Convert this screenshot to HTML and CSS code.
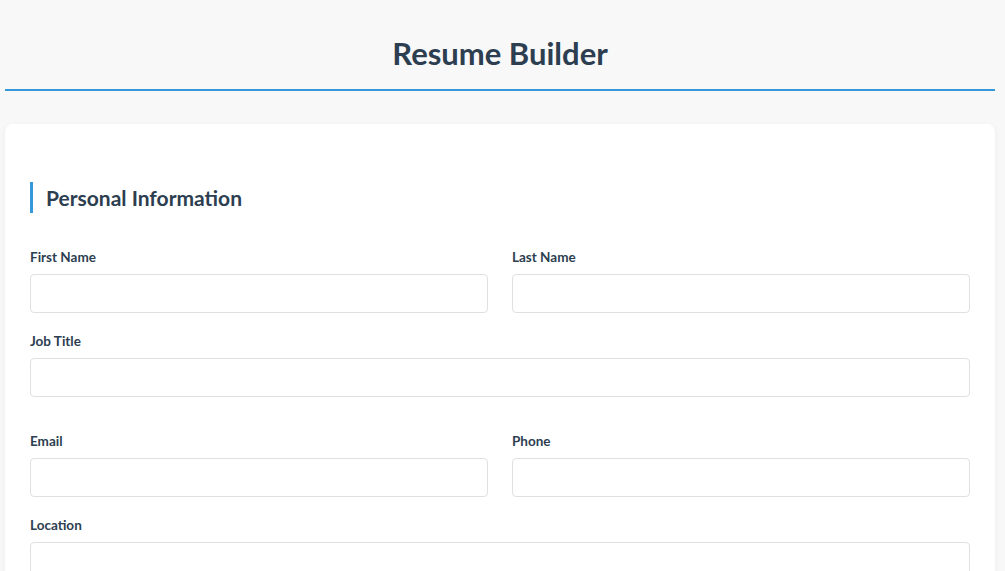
FILE: index.html
```html
<!DOCTYPE html>
<html lang="en">
<head>
<meta charset="utf-8">
<title>Resume Builder</title>
<link rel="stylesheet" href="styles.css">
</head>
<body>
<div class="page">
  <header class="site-header">
    <h1 class="site-title">Resume Builder</h1>
  </header>
  <main class="card">
    <section class="section">
      <h2 class="section-title">Personal Information</h2>
      <div class="row">
        <div class="field">
          <label class="label" for="first">First Name</label>
          <input class="input" id="first" type="text">
        </div>
        <div class="field">
          <label class="label" for="last">Last Name</label>
          <input class="input" id="last" type="text">
        </div>
      </div>
      <div class="field field-last">
        <label class="label" for="job">Job Title</label>
        <input class="input" id="job" type="text">
      </div>
      <div class="row">
        <div class="field">
          <label class="label" for="email">Email</label>
          <input class="input" id="email" type="email">
        </div>
        <div class="field">
          <label class="label" for="phone">Phone</label>
          <input class="input" id="phone" type="tel">
        </div>
      </div>
      <div class="field">
        <label class="label" for="loc">Location</label>
        <input class="input" id="loc" type="text">
      </div>
    </section>
  </main>
</div>
</body>
</html>
```

FILE: styles.css
```css
* { box-sizing: border-box; }
html, body { margin: 0; padding: 0; }
body {
  background: #f8f8f8;
  font-family: Lato, "Open Sans", "Noto Sans", sans-serif;
  color: #2c3e50;
}
.page {
  padding: 0 10px 40px 5px;
}
.site-header {
  border-bottom: 2px solid #3498db;
  padding: 34px 0 17px;
  text-align: center;
}
.site-title {
  margin: 0;
  font-size: 31px;
  line-height: 38px;
  font-weight: 700;
  color: #2c3e50;
}
.card {
  margin-top: 33px;
  background: #fff;
  border-radius: 8px;
  box-shadow: 0 2px 6px rgba(0,0,0,0.06);
  padding: 58px 25px 30px;
}
.section-title {
  margin: 0 0 34px;
  border-left: 3px solid #3498db;
  padding-left: 13px;
  font-size: 21px;
  line-height: 31px;
  font-weight: 700;
  color: #2c3e50;
}
.row {
  display: grid;
  grid-template-columns: 1fr 1fr;
  gap: 24px;
}
.field {
  margin-bottom: 18px;
}
.field-last {
  margin-bottom: 34px;
}
.label {
  display: block;
  font-size: 13.5px;
  line-height: 20px;
  font-weight: 700;
  color: #2c3e50;
  margin-bottom: 7px;
}
.input {
  display: block;
  width: 100%;
  height: 39px;
  border: 1px solid #e0e0e0;
  border-radius: 4px;
  background: #fff;
  font: inherit;
  font-size: 14px;
  padding: 8px 10px;
}
```
